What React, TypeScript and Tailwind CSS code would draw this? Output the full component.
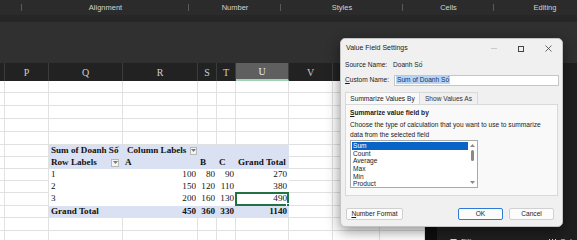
import React from "react";

const serif = "font-['Liberation_Serif','Times_New_Roman',serif]";
const sans = "font-['Liberation_Sans',Arial,sans-serif]";

const cols = [
  { k: "", w: "w-[5px]" },
  { k: "P", w: "w-[44px]" },
  { k: "Q", w: "w-[74px]" },
  { k: "R", w: "w-[75px]" },
  { k: "S", w: "w-[19px]" },
  { k: "T", w: "w-[19px]" },
  { k: "U", w: "w-[53px]" },
  { k: "V", w: "w-[44px]" },
  { k: "W", w: "w-[47px]" },
  { k: "X", w: "w-[45px]" },
];

type Row = {
  h: string;
  kind: "plain" | "band" | "data";
  cells?: Record<string, React.ReactNode>;
};

function Drop() {
  return (
    <span className="inline-flex w-[8px] h-[8px] bg-[#f4f4f4] border border-[#b8b8b8] items-center justify-center">
      <svg width="5" height="3" viewBox="0 0 5 3">
        <path d="M0 0h5L2.5 3z" fill="#7a7a7a" />
      </svg>
    </span>
  );
}

const rows: Row[] = [
  { h: "h-[12px]", kind: "plain" },
  { h: "h-[13px]", kind: "plain" },
  { h: "h-[13px]", kind: "plain" },
  { h: "h-[13px]", kind: "plain" },
  { h: "h-[13px]", kind: "plain" },
  {
    h: "h-[12px]",
    kind: "band",
    cells: {
      Q: <span className="whitespace-nowrap">Sum of Doanh Số</span>,
      R: (
        <span className="flex items-center w-full pl-[2px] gap-[4px] whitespace-nowrap">
          Column Labels <Drop />
        </span>
      ),
    },
  },
  {
    h: "h-[12px]",
    kind: "band",
    cells: {
      Q: (
        <span className="flex items-center w-full justify-between pr-[3px]">
          Row Labels <Drop />
        </span>
      ),
      R: "A",
      S: "B",
      T: "C",
      U: "Grand Total",
    },
  },
  { h: "h-[12px]", kind: "data", cells: { Q: "1", R: "100", S: "80", T: "90", U: "270" } },
  { h: "h-[12px]", kind: "data", cells: { Q: "2", R: "150", S: "120", T: "110", U: "380" } },
  { h: "h-[13px]", kind: "data", cells: { Q: "3", R: "200", S: "160", T: "130", U: "490" } },
  {
    h: "h-[12px]",
    kind: "band",
    cells: { Q: "Grand Total", R: "450", S: "360", T: "330", U: "1140" },
  },
  { h: "h-[13px]", kind: "plain" },
  { h: "h-[13px]", kind: "plain" },
];

const pivotCols = ["Q", "R", "S", "T", "U"];

function SheetRow({ row, idx }: { row: Row; idx: number }) {
  return (
    <div className={`flex ${row.h}`}>
      {cols.map((c) => {
        const inPivot = row.kind !== "plain" && pivotCols.includes(c.k);
        const content = row.cells?.[c.k];
        const numeric = typeof content === "string" && /^\d+$/.test(content) && c.k !== "Q";
        const bold = row.kind === "band";
        const selected = idx === 9 && c.k === "U";
        let cls = "border-r border-b border-[#e1e1e1] bg-white";
        if (inPivot && row.kind === "band") cls = "border-r border-b border-transparent bg-[#d9e1f2]";
        if (inPivot && row.kind === "data") cls = "border-r border-b border-transparent bg-white";
        return (
          <div
            key={c.k}
            className={`${c.w} shrink-0 relative flex items-center overflow-visible leading-none ${cls} ${
              numeric ? "justify-end pr-[1px]" : "pl-[2px]"
            } ${bold ? "font-bold" : ""}`}
          >
            {content}
            {selected && (
              <div className="absolute -left-px -top-px -right-px -bottom-px border-2 border-[#217346]">
                <div className="absolute -right-[3px] -bottom-[3px] w-[4px] h-[4px] bg-[#217346] border border-white" />
              </div>
            )}
          </div>
        );
      })}
    </div>
  );
}

function Dialog() {
  return (
    <div
      className={`absolute left-[340px] top-[38px] w-[223px] h-[189px] bg-[#f0f0f0] rounded-[5px] border border-[#c4c4c4] shadow-[0_4px_14px_rgba(0,0,0,0.45)] flex flex-col ${sans} text-[6.6px] text-[#1b1b1b]`}
    >
      {/* title bar */}
      <div className="h-[19px] flex items-center pl-[5px]">
        <span className="text-[7px]">Value Field Settings</span>
        <div className="ml-auto flex h-full">
          <div className="w-[27px] flex items-center justify-center">
            <div className="w-[6px] h-px bg-[#c9c9c9]" />
          </div>
          <div className="w-[27px] flex items-center justify-center">
            <div className="w-[6px] h-[6px] border border-[#444]" />
          </div>
          <div className="w-[28px] flex items-center justify-center">
            <svg width="7" height="7" viewBox="0 0 7 7">
              <path d="M0.5 0.5l6 6M6.5 0.5l-6 6" stroke="#444" strokeWidth="0.8" />
            </svg>
          </div>
        </div>
      </div>

      <div className="mt-[1px] h-[12px] flex items-center px-[4px]">
        <span className="w-[48px]">Source Name:</span>
        <span>Doanh Số</span>
      </div>

      <div className="mt-[3px] h-[12px] flex items-center pl-[4px] pr-[3px]">
        <span className="w-[49px]">
          <span className="underline">C</span>ustom Name:
        </span>
        <div className="flex-1 h-[11px] bg-white border border-[#c6c6c6] flex items-center px-[1px]">
          <span className="bg-[#b8d5f4] text-[#12306e] px-[1px] leading-[8px]">Sum of Doanh Số</span>
        </div>
      </div>

      <div className="mt-[6px] h-[12px] flex px-[4px]">
        <div className="w-[75px] bg-[#f9f9f9] border border-b-0 border-[#d9d9d9] flex items-center justify-center">
          Summarize Values By
        </div>
        <div className="w-[58px] border-t border-r border-[#d9d9d9] flex items-center justify-center text-[#333]">
          Show Values As
        </div>
      </div>

      <div className="mx-[4px] h-[92px] bg-[#f9f9f9] border border-[#d9d9d9] px-[4px] pt-[3px]">
        <div className="h-[10px] leading-[10px] font-semibold">
          <span className="underline">S</span>ummarize value field by
        </div>
        <div className="mt-[2px] leading-[10px]">
          Choose the type of calculation that you want to use to summarize
          <br />
          data from the selected field
        </div>
        <div className="w-[128px] h-[48px] border border-[#a9a9a9] bg-white flex">
          <div className="flex-1 pt-[1px] pl-[1px]">
            {["Sum", "Count", "Average", "Max", "Min", "Product"].map((t, i) => (
              <div
                key={t}
                className={`h-[7.7px] leading-[7.7px] pl-[1px] ${i === 0 ? "bg-[#0a64c8] text-white" : ""}`}
              >
                {t}
              </div>
            ))}
          </div>
          <div className="w-[9px] flex flex-col items-center py-[3px]">
            <svg width="5" height="3" viewBox="0 0 5 3">
              <path d="M0 3h5L2.5 0z" fill="#8a8a8a" />
            </svg>
            <div className="mt-[3px] w-[3px] h-[11px] rounded-full bg-[#8a8a8a]" />
            <div className="flex-1" />
            <svg width="5" height="3" viewBox="0 0 5 3">
              <path d="M0 0h5L2.5 3z" fill="#8a8a8a" />
            </svg>
          </div>
        </div>
      </div>

      <div className="mt-auto mb-[6px] flex px-[5px] h-[12px]">
        <div className="w-[57px] border border-[#d0d0d0] bg-[#fcfcfc] rounded-[2px] flex items-center justify-center">
          <span className="underline">N</span>umber Format
        </div>
        <div className="flex-1" />
        <div className="w-[45px] border-[1.5px] border-[#2d7bd8] bg-[#fcfcfc] rounded-[2px] flex items-center justify-center">
          OK
        </div>
        <div className="w-[45px] ml-[6px] mr-[3px] border border-[#d0d0d0] bg-[#fcfcfc] rounded-[2px] flex items-center justify-center">
          Cancel
        </div>
      </div>
    </div>
  );
}

export default function App() {
  const groups = [
    { label: "", w: "w-[22px]" },
    { label: "Alignment", w: "w-[167px]" },
    { label: "Number", w: "w-[92px]" },
    { label: "Styles", w: "w-[122px]" },
    { label: "Cells", w: "w-[91px]" },
    { label: "Editing", w: "w-[102px]" },
  ];
  return (
    <div className="relative w-[577px] h-[240px] overflow-hidden bg-[#2b2b2b]">
      {/* ribbon group labels */}
      <div className={`h-[15px] flex bg-[#2b2b2b] ${sans} text-[7.5px] text-[#d2d2d2]`}>
        {groups.map((g, i) => (
          <div key={i} className={`${g.w} shrink-0 relative flex items-center justify-center`}>
            {g.label}
            <div className="absolute right-0 top-[4px] w-px h-[7px] bg-[#5a5a5a]" />
          </div>
        ))}
      </div>
      <div className="h-[7px] bg-[#262626]" />
      <div className="h-[41px] bg-[#303030]" />

      <div className="flex">
        {/* sheet */}
        <div className={`w-[425px] ${serif}`}>
          <div className="flex h-[18px] bg-[#222222] text-[10px] text-[#cdcdcd]">
            {cols.map((c) => (
              <div
                key={c.k}
                className={`${c.w} shrink-0 flex items-center justify-center border-r border-[#3c3c3c] ${
                  c.k === "U" ? "bg-[#5f5f5f] text-[#eeeeee] border-b-2 border-b-[#9fd3b4]" : ""
                }`}
              >
                {c.k}
              </div>
            ))}
          </div>
          <div className="bg-white text-[9.1px] text-[#111]">
            {rows.map((r, i) => (
              <SheetRow key={i} row={r} idx={i} />
            ))}
          </div>
        </div>

        {/* right pane */}
        <div className="flex-1 flex h-[178px]">
          <div className="w-[12px] bg-[#0e0e0e]" />
          <div className="flex-1 bg-[#1f1f1f] flex flex-col">
            <div className="flex-1" />
            <div className={`h-[8px] overflow-hidden flex items-start ${sans} text-[8px] text-[#dcdcdc] pt-[3px]`}>
              <div className="ml-[13px] flex items-center gap-[4px]">
                <svg width="7" height="7" viewBox="0 0 7 7">
                  <path d="M0 0h7L4.2 3.5V7L2.8 6V3.5z" fill="#dcdcdc" />
                </svg>
                <span>Filters</span>
              </div>
              <div className="ml-[66px] flex items-center gap-[4px]">
                <svg width="7" height="7" viewBox="0 0 7 7">
                  <path d="M0.5 0v7M3.5 0v7M6.5 0v7" stroke="#dcdcdc" strokeWidth="1" />
                </svg>
                <span>Columns</span>
              </div>
            </div>
          </div>
        </div>
      </div>

      <Dialog />
    </div>
  );
}
